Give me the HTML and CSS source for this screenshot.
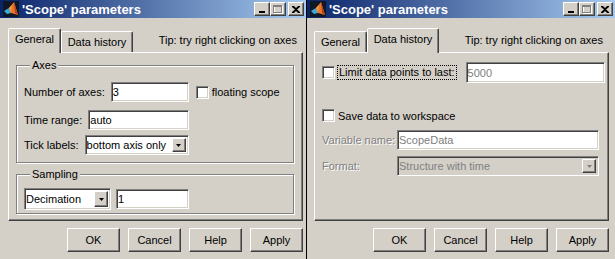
FILE: index.html
```html
<!DOCTYPE html>
<html lang="en">
<head>
<meta charset="UTF-8">
<title>'Scope' parameters</title>
<link rel="stylesheet" href="styles.css">
</head>
<body>
<div class="desk">

    <section class="win win-first">
        <header class="titlebar">
            <svg class="app-icon" viewBox="0 0 16 16">
                <rect width="16" height="16" fill="#101828"/>
                <polygon points="1,10 6,7 8,12 4,13" fill="#3fa9d8"/>
                <polygon points="6,7 11,1 15,14 8,12" fill="#e8742a"/>
                <polygon points="11,1 15,14 12,12" fill="#b8401c"/>
                <polygon points="6,7 9,4 8,12" fill="#f4a040"/>
            </svg>
            <span class="title">'Scope' parameters</span>
            <div class="caption-btns">
                <span class="cbtn"><svg width="8" height="7"><rect x="1" y="5" width="6" height="2" fill="#000"/></svg></span>
                <span class="cbtn"><svg width="10" height="9"><rect x="1.5" y="1.5" width="8" height="7" fill="none" stroke="#fff"/><rect x="0.5" y="0.5" width="8" height="7" fill="none" stroke="#808080"/><rect x="0" y="1" width="9" height="1" fill="#808080"/></svg></span>
                <span class="cbtn cbtn-close"><svg width="8" height="7"><path d="M0 0h2l2 2 2-2h2v1l-3 2.5 3 2.5v1h-2l-2-2-2 2h-2v-1l3-2.5-3-2.5z" fill="#000"/></svg></span>
            </div>
        </header>
        <div class="win-body">
            <div class="tabs">
                <div class="tab tab-general tab-active">General</div>
                <div class="tab tab-history">Data history</div>
                <div class="tip">Tip: try right clicking on axes</div>
            </div>
            <div class="panel">
                <fieldset class="group group-axes">
                    <legend>Axes</legend>
                    <div class="row">
                        <span class="label">Number of axes:</span>
                        <input class="field field-axes" type="text" value="3">
                        <span class="check check-floating"></span>
                        <span>floating scope</span>
                    </div>
                    <div class="row row-range">
                        <span class="label">Time range:</span>
                        <input class="field field-range" type="text" value="auto">
                    </div>
                    <div class="row row-tick">
                        <span class="label">Tick labels:</span>
                        <div class="combo combo-tick">
                            <span class="combo-text">bottom axis only</span>
                            <span class="combo-btn"><svg width="5" height="3"><polygon points="0,0 5,0 2.5,3" fill="#000"/></svg></span>
                        </div>
                    </div>
                </fieldset>
                <fieldset class="group group-sampling">
                    <legend>Sampling</legend>
                    <div class="row">
                        <div class="combo combo-decimation">
                            <span class="combo-text">Decimation</span>
                            <span class="combo-btn"><svg width="5" height="3"><polygon points="0,0 5,0 2.5,3" fill="#000"/></svg></span>
                        </div>
                        <input class="field field-decimation" type="text" value="1">
                    </div>
                </fieldset>
            </div>
            <div class="actions">
                <button class="btn">OK</button>
                <button class="btn">Cancel</button>
                <button class="btn">Help</button>
                <button class="btn">Apply</button>
            </div>
        </div>
    </section>

    <section class="win win-second">
        <header class="titlebar">
            <svg class="app-icon" viewBox="0 0 16 16">
                <rect width="16" height="16" fill="#101828"/>
                <polygon points="1,10 6,7 8,12 4,13" fill="#3fa9d8"/>
                <polygon points="6,7 11,1 15,14 8,12" fill="#e8742a"/>
                <polygon points="11,1 15,14 12,12" fill="#b8401c"/>
                <polygon points="6,7 9,4 8,12" fill="#f4a040"/>
            </svg>
            <span class="title">'Scope' parameters</span>
            <div class="caption-btns">
                <span class="cbtn"><svg width="8" height="7"><rect x="1" y="5" width="6" height="2" fill="#000"/></svg></span>
                <span class="cbtn"><svg width="10" height="9"><rect x="1.5" y="1.5" width="8" height="7" fill="none" stroke="#fff"/><rect x="0.5" y="0.5" width="8" height="7" fill="none" stroke="#808080"/><rect x="0" y="1" width="9" height="1" fill="#808080"/></svg></span>
                <span class="cbtn cbtn-close"><svg width="8" height="7"><path d="M0 0h2l2 2 2-2h2v1l-3 2.5 3 2.5v1h-2l-2-2-2 2h-2v-1l3-2.5-3-2.5z" fill="#000"/></svg></span>
            </div>
        </header>
        <div class="win-body">
            <div class="tabs">
                <div class="tab tab-general">General</div>
                <div class="tab tab-history tab-active">Data history</div>
                <div class="tip">Tip: try right clicking on axes</div>
            </div>
            <div class="panel panel-history">
                <div class="hrow hrow-limit">
                    <span class="check"></span>
                    <span class="focus-label">Limit data points to last:</span>
                    <input class="field field-limit dim-text" type="text" value="5000">
                </div>
                <div class="hrow hrow-save">
                    <span class="check"></span>
                    <span>Save data to workspace</span>
                </div>
                <div class="hrow hrow-var">
                    <span class="dim-label">Variable name:</span>
                    <input class="field field-wide dim-text" type="text" value="ScopeData">
                </div>
                <div class="hrow hrow-format">
                    <span class="dim-label">Format:</span>
                    <div class="combo combo-wide combo-disabled">
                        <span class="combo-text">Structure with time</span>
                        <span class="combo-btn"><svg width="5" height="3"><polygon points="0,0 5,0 2.5,3" fill="#808080"/></svg></span>
                    </div>
                </div>
            </div>
            <div class="actions">
                <button class="btn">OK</button>
                <button class="btn">Cancel</button>
                <button class="btn">Help</button>
                <button class="btn">Apply</button>
            </div>
        </div>
    </section>

</div>
</body>
</html>
```

FILE: styles.css
```css
* {
    box-sizing: border-box;
}
body {
    margin: 0;
    background-color: #d4d0c8;
    font-family: "Liberation Sans", Arial, sans-serif;
    font-size: 11px;
    color: #000;
}
.desk {
    display: flex;
    height: 259px;
    overflow: hidden;
}
.win {
    flex: none;
    background-color: #d4d0c8;
}
.win-first {
    width: 307px;
    border-right: 1px solid #000;
}
.win-second {
    width: 308px;
}
.titlebar {
    height: 18px;
    display: flex;
    align-items: center;
    padding: 0 2px 0 3px;
    background: linear-gradient(to right, #0a246a, #a6caf0);
    color: #fff;
}
.app-icon {
    width: 16px;
    height: 16px;
    margin-right: 3px;
}
.title {
    font-weight: bold;
    font-size: 13px;
}
.caption-btns {
    display: flex;
    margin-left: auto;
}
.cbtn {
    width: 16px;
    height: 14px;
    display: flex;
    align-items: center;
    justify-content: center;
    background-color: #d4d0c8;
    border: 1px solid;
    border-color: #fff #404040 #404040 #fff;
    box-shadow: inset -1px -1px #808080;
}
.cbtn-close {
    margin-left: 2px;
}

.win-body {
    padding-left: 8px;
}
.win-second .win-body {
    padding-left: 7px;
}
.tabs {
    display: flex;
    align-items: flex-end;
    width: 295px;
    height: 24px;
    margin-top: 10px;
}
.tab {
    height: 21px;
    display: flex;
    align-items: center;
    justify-content: center;
    border: 1px solid;
    border-bottom: none;
    border-color: #fff #404040 transparent #fff;
    border-radius: 2px 2px 0 0;
    box-shadow: inset -1px 0 #808080;
}
.tab-general { width: 53px; }
.tab-history { width: 72px; }
.tab-active {
    position: relative;
    height: 25px;
    margin-bottom: -1px;
    padding-bottom: 4px;
    background-color: #d4d0c8;
}
.tip {
    align-self: center;
    margin-left: auto;
    padding-right: 6px;
}

.panel {
    width: 295px;
    height: 169px;
    padding: 6px 8px 0 7px;
    border: 1px solid;
    border-color: #fff #404040 #404040 #fff;
    box-shadow: inset -1px -1px #808080;
}
.group {
    margin: 0;
    border: 1px solid #808080;
    box-shadow: inset 1px 1px #fff, 1px 1px #fff;
}
.group legend {
    margin-left: 6px;
    padding: 0 2px;
    line-height: 13px;
    background-color: #d4d0c8;
}
.group-axes {
    height: 104px;
    padding: 10px 0 0 7px;
}
.group-sampling {
    height: 46px;
    margin-top: 5px;
    padding: 8px 0 0 7px;
}
.row {
    display: flex;
    align-items: center;
    gap: 6px;
    height: 20px;
}
.row-range { margin-top: 8px; }
.row-tick { margin-top: 5px; }

.field {
    height: 20px;
    padding: 0 1px;
    font: inherit;
    color: #000;
    background-color: #fff;
    border: 1px solid;
    border-color: #808080 #fff #fff #808080;
    box-shadow: inset 1px 1px #404040, inset -1px -1px #d4d0c8;
    outline: none;
}
.field-axes { width: 78px; }
.field-range { width: 101px; }
.field-decimation { width: 73px; margin-left: -1px; }
.field-limit { width: 139px; height: 21px; }
.field-wide { width: 202px; }
.dim-text { color: #808080; }

.check {
    flex: none;
    width: 13px;
    height: 13px;
    background-color: #fff;
    border: 1px solid;
    border-color: #808080 #fff #fff #808080;
    box-shadow: inset 1px 1px #404040, inset -1px -1px #d4d0c8;
}
.check-floating {
    margin-left: 1px;
    margin-right: -3px;
}

.combo {
    height: 20px;
    display: flex;
    align-items: stretch;
    padding: 2px;
    background-color: #fff;
    border: 1px solid;
    border-color: #808080 #fff #fff #808080;
    box-shadow: inset 1px 1px #404040, inset -1px -1px #d4d0c8;
}
.combo-text {
    flex: 1;
    display: flex;
    align-items: center;
    margin-left: -1px;
}
.combo-btn {
    width: 14px;
    display: flex;
    align-items: center;
    justify-content: center;
    background-color: #d4d0c8;
    border: 1px solid;
    border-color: #fff #404040 #404040 #fff;
    box-shadow: inset -1px -1px #808080;
}
.combo-tick { width: 104px; }
.combo-decimation { width: 87px; height: 22px; }
.combo-wide { width: 202px; }
.combo-disabled {
    background-color: #d4d0c8;
    color: #808080;
}

.panel-history {
    padding: 9px 0 0 7px;
}
.hrow {
    display: flex;
    align-items: center;
}
.hrow-limit { height: 21px; }
.hrow-save { height: 13px; margin-top: 26px; gap: 3px; }
.hrow-var { margin-top: 8px; }
.hrow-format { margin-top: 6px; }
.focus-label {
    margin: 0 10px 0 3px;
    padding: 0 1px;
    line-height: 13px;
    outline: 1px dotted #000;
}
.dim-label {
    width: 75px;
    color: #808080;
    text-shadow: 1px 1px #fff;
}

.actions {
    display: flex;
    justify-content: flex-end;
    gap: 8px;
    width: 295px;
    margin-top: 7px;
}
.btn {
    width: 53px;
    height: 24px;
    padding: 0;
    font: inherit;
    color: #000;
    background-color: #d4d0c8;
    border: 1px solid;
    border-color: #fff #404040 #404040 #fff;
    box-shadow: inset -1px -1px #808080;
}
```
